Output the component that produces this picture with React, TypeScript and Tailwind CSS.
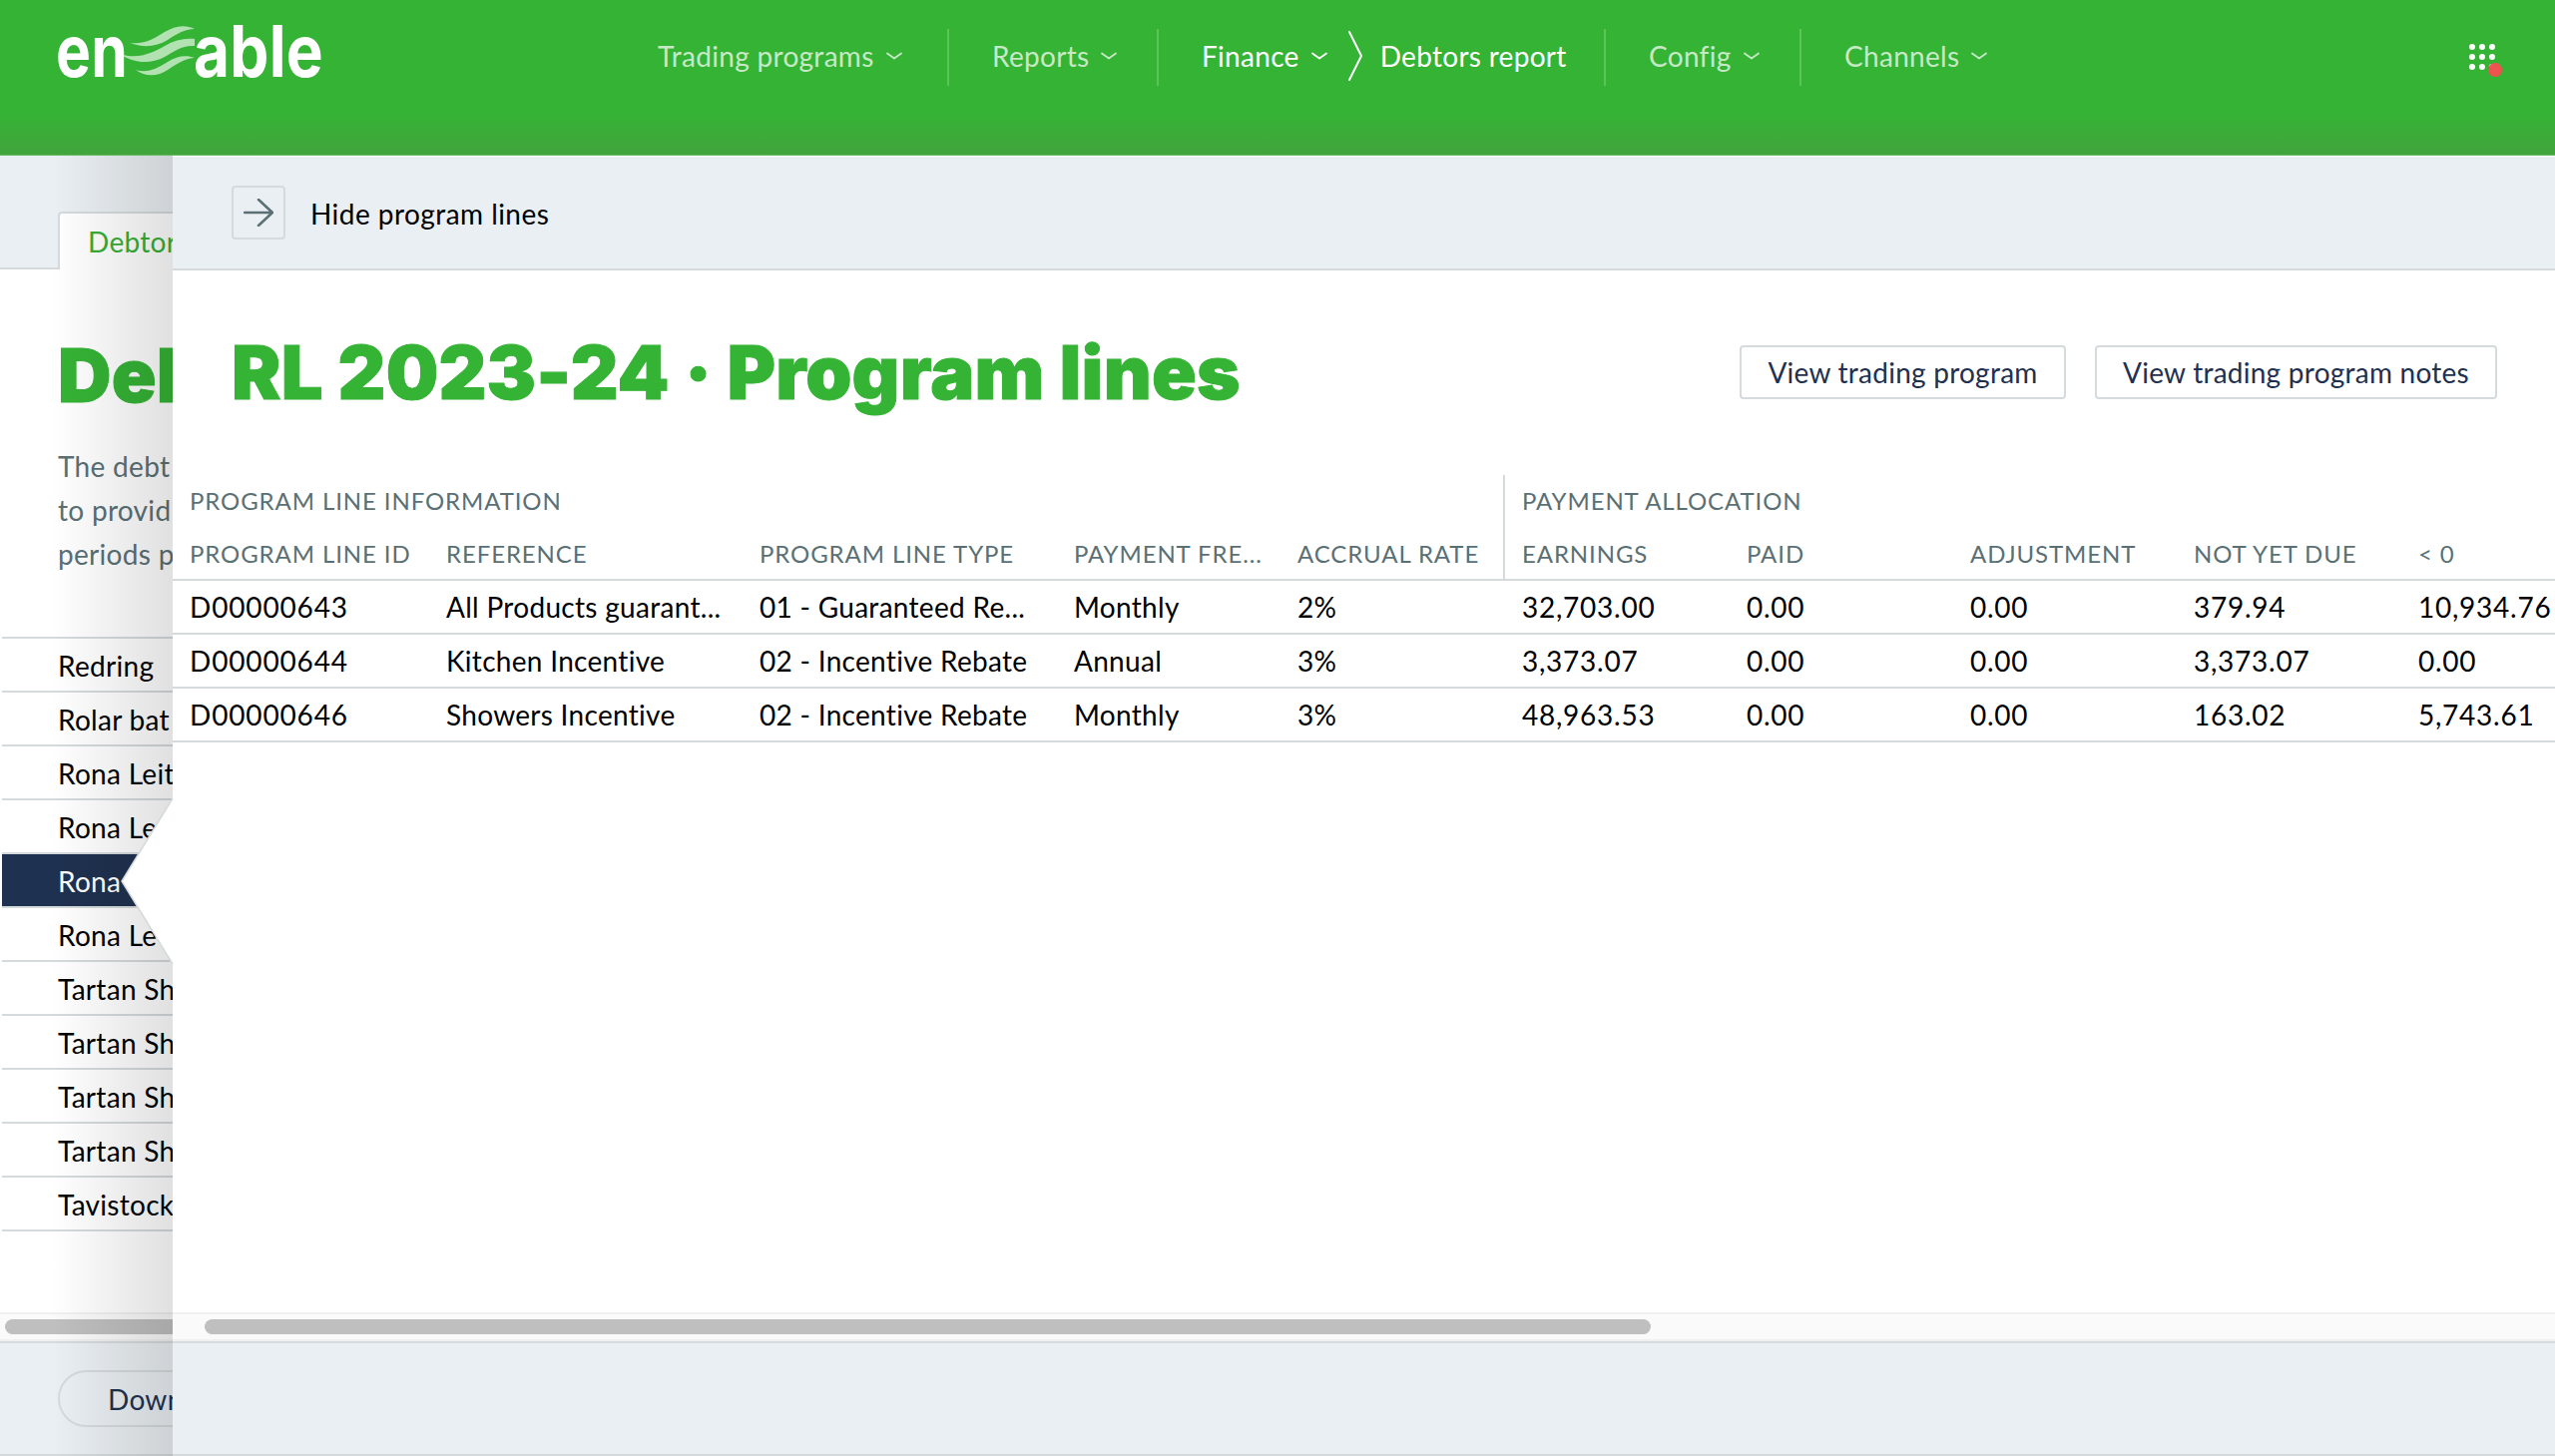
import React from "react";

const rowGrid = "grid grid-cols-[258px_314px_315px_224px_222px_228px_224px_224px_225px_160px] w-[2394px]";

function Chevron({ bright = false }: { bright?: boolean }) {
  return (
    <svg width="18" height="10" viewBox="0 0 18 10" fill="none" className={bright ? "ml-[11px] text-white" : "ml-[11px] text-[#c6e9c5]"}>
      <path d="M2 2.5 L9 7.5 L16 2.5" stroke="currentColor" strokeWidth="1.8" strokeLinecap="round" strokeLinejoin="round" />
    </svg>
  );
}

function Logo() {
  return (
    <svg width="300" height="100" viewBox="0 0 300 100" className="shrink-0 overflow-visible">
      <text x="16" y="67" fill="#fff" fontFamily="Inter, sans-serif" fontWeight="700" fontSize="72" textLength="72" lengthAdjust="spacingAndGlyphs">en</text>
      <text x="154" y="67" fill="#fff" fontFamily="Inter, sans-serif" fontWeight="700" fontSize="72" textLength="130" lengthAdjust="spacingAndGlyphs">able</text>
      <g fill="#fff" fillOpacity="0.62">
        <path d="M90 33 C105 35 115 28 125 22 C135 16 145 14 155 19 C145 19 137 24 128 30 C117 37 103 38 90 33Z" />
        <path d="M80 44 C98 50 113 43 125 36 C135 30 145 28 155 29 L155 36 C143 35 135 41 125 47 C110 55 93 53 80 44Z" />
        <path d="M96 60 C108 64 118 58 128 52 C137 46 147 45 155 48 C147 48 138 53 128 60 C118 67 105 67 96 60Z" />
      </g>
    </svg>
  );
}

function Dots() {
  const dots = [0, 1, 2, 3, 4, 5, 6, 7, 8];
  return (
    <div className="relative grid grid-cols-[6px_6px_6px] gap-x-[4px] gap-y-[4px]">
      {dots.map((d) => (
        <span key={d} className="w-[6px] h-[6px] rounded-full bg-white" />
      ))}
      <span className="absolute left-[19px] top-[19px] w-[14px] h-[14px] rounded-full bg-[#ef5350]" />
    </div>
  );
}

function Header() {
  return (
    <header className="h-[156px] shrink-0 bg-[linear-gradient(180deg,#35b335_0%,#35b335_72%,#41a43c_100%)] border-b border-[#6dbb68] flex items-start pl-[40px] text-[28px] text-[#c6e9c5] tracking-[0.3px]">
      <div className="mt-[10px] w-[619px] shrink-0">
        <Logo />
      </div>
      <nav className="flex items-stretch h-[57px] mt-[29px]">
        <div className="w-[290px] flex items-center pb-[3px]">
          <span>Trading programs</span>
          <Chevron />
        </div>
        <div className="w-[210px] flex items-center border-l-2 border-[#5cc45b] pl-[43px] pb-[3px]">
          <span>Reports</span>
          <Chevron />
        </div>
        <div className="w-[448px] flex items-center border-l-2 border-[#5cc45b] pl-[43px] pb-[3px] text-white">
          <span>Finance</span>
          <Chevron bright />
          <svg width="16" height="52" viewBox="0 0 16 52" fill="none" className="ml-[19px] mr-[17px]">
            <path d="M2 2 L14 26 L2 50" stroke="#fff" strokeWidth="2" strokeLinecap="round" strokeLinejoin="round" />
          </svg>
          <span>Debtors report</span>
        </div>
        <div className="w-[196px] flex items-center border-l-2 border-[#5cc45b] pl-[43px] pb-[3px]">
          <span>Config</span>
          <Chevron />
        </div>
        <div className="w-[300px] flex items-center border-l-2 border-[#5cc45b] pl-[43px] pb-[3px]">
          <span>Channels</span>
          <Chevron />
        </div>
      </nav>
      <div className="ml-[371px] mt-[44px]">
        <Dots />
      </div>
    </header>
  );
}

const leftRows = ["Redring", "Rolar bat", "Rona Leit", "Rona Le", "Rona", "Rona Le", "Tartan Sh", "Tartan Sh", "Tartan Sh", "Tartan Sh", "Tavistock"];

function BackPage() {
  return (
    <div className="absolute left-0 top-[156px] bottom-0 w-[173px] overflow-hidden flex flex-col text-[28px] tracking-[0.3px] whitespace-nowrap bg-white">
      <div className="h-[114px] shrink-0 bg-[#eaeff3] border-b-2 border-[#d5dadd] flex items-end pl-[58px]">
        <div className="h-[58px] w-[140px] -mb-[2px] bg-white border-t-2 border-l-2 border-[#d5dadd] rounded-tl-[4px] pl-[28px] pt-[7px] text-[#36ae36]">Debtors</div>
      </div>
      <div className="h-[368px] shrink-0 pl-[58px]">
        <div className="mt-[62px] font-black text-[74px] leading-[88px] text-[#35b335] tracking-[0.2px] font-[Inter] [-webkit-text-stroke:1px_#35b335]">Deb</div>
        <div className="mt-[25px] text-[#5a7075] leading-[44px]">
          <div>The debt</div>
          <div>to provid</div>
          <div>periods p</div>
        </div>
      </div>
      <div className="border-b-2 border-[#d5dadd] ml-[2px]" />
      {leftRows.map((r, i) => (
        <div
          key={i}
          className={
            i === 4
              ? "h-[54px] shrink-0 ml-[2px] pl-[56px] pt-[1px] flex items-center bg-[#1f3150] text-white border-b-2 border-[#d5dadd]"
              : "h-[54px] shrink-0 ml-[2px] pl-[56px] pt-[1px] flex items-center text-black border-b-2 border-[#d5dadd]"
          }
        >
          {r}
        </div>
      ))}
      <div className="flex-1" />
      <div className="h-[29px] shrink-0 bg-[#fafafa] border-y-2 border-[#f0f0f0] flex items-center pl-[5px]">
        <div className="h-[15px] w-[200px] rounded-l-full bg-[#bfbfbf]" />
      </div>
      <div className="h-[115px] shrink-0 bg-[#eaeff3] border-y-2 border-[#d5dadd] pl-[58px] pt-[27px]">
        <div className="h-[57px] w-[220px] rounded-full border-2 border-[#d5dadd] pl-[48px] flex items-center text-[#1f3150]">Download</div>
      </div>
      <div className="absolute inset-0 bg-[linear-gradient(90deg,rgba(0,0,0,0)_30%,rgba(0,0,0,0.12)_100%)]" />
    </div>
  );
}

const rows = [
  ["D00000643", "All Products guarant...", "01 - Guaranteed Re...", "Monthly", "2%", "32,703.00", "0.00", "0.00", "379.94", "10,934.76"],
  ["D00000644", "Kitchen Incentive", "02 - Incentive Rebate", "Annual", "3%", "3,373.07", "0.00", "0.00", "3,373.07", "0.00"],
  ["D00000646", "Showers Incentive", "02 - Incentive Rebate", "Monthly", "3%", "48,963.53", "0.00", "0.00", "163.02", "5,743.61"],
];

const headers = ["PROGRAM LINE ID", "REFERENCE", "PROGRAM LINE TYPE", "PAYMENT FRE...", "ACCRUAL RATE", "EARNINGS", "PAID", "ADJUSTMENT", "NOT YET DUE", "< 0"];

function cellClass(i: number) {
  if (i === 0) return "pl-[17px] flex items-center tracking-[0.85px]";
  if (i === 5) return "pl-[19px] flex items-center tracking-[0.75px]";
  if (i >= 6) return "pl-[16px] flex items-center tracking-[0.75px]";
  return "pl-[16px] flex items-center tracking-[0.3px]";
}

function Panel() {
  return (
    <div className="absolute left-[173px] top-[157px] right-0 bottom-0 flex flex-col bg-white">
      <div className="h-[114px] shrink-0 bg-[#eaeff3] border-b-2 border-[#d5dadd] flex items-center pl-[59px]">
        <div className="w-[54px] h-[54px] rounded-[4px] border-2 border-[#d5dadd] flex items-center justify-center">
          <svg width="30" height="28" viewBox="0 0 30 28" fill="none">
            <path d="M1 14 H29 M15 1 L29 14 L15 27" stroke="#5a7075" strokeWidth="2.5" strokeLinecap="round" strokeLinejoin="round" />
          </svg>
        </div>
        <span className="ml-[25px] pt-[2px] text-[28px] text-black tracking-[0.45px]">Hide program lines</span>
      </div>
      <div className="flex-1 overflow-hidden">
        <div className="flex items-center justify-between pl-[59px] pr-[58px] pt-[75px] h-[128px]">
          <h1 className="font-black text-[74px] leading-[54px] text-[#35b335] tracking-[0.2px] font-[Inter] [-webkit-text-stroke:1px_#35b335]">RL 2023-24 · Program lines</h1>
          <div className="flex gap-[29px]">
            <button className="h-[54px] w-[327px] rounded-[4px] border-2 border-[#d5dadd] text-[28px] tracking-[0.25px] text-[#1f3150]">View trading program</button>
            <button className="h-[54px] w-[403px] rounded-[4px] border-2 border-[#d5dadd] text-[28px] tracking-[0.25px] text-[#1f3150]">View trading program notes</button>
          </div>
        </div>
        <div className="mt-[77px] text-[24px] tracking-[0.9px] text-[#5a7075] whitespace-nowrap">
          <div className={rowGrid + " h-[52px]"}>
            <div className="col-span-5 pl-[17px] flex items-center">PROGRAM LINE INFORMATION</div>
            <div className="col-span-5 border-l-2 border-[#d5dadd] pl-[17px] flex items-center">PAYMENT ALLOCATION</div>
          </div>
          <div className={rowGrid + " h-[52px]"}>
            {headers.map((h, i) => (
              <div
                key={h}
                className={
                  i === 5
                    ? "border-l-2 border-[#d5dadd] pl-[17px] pt-[2px] flex items-center"
                    : i === 0
                      ? "pl-[17px] pt-[2px] flex items-center"
                      : "pl-[16px] pt-[2px] flex items-center"
                }
              >
                {h}
              </div>
            ))}
          </div>
        </div>
        <div className="border-t-2 border-[#d5dadd] text-[28px] text-black whitespace-nowrap">
          {rows.map((r) => (
            <div key={r[0]} className="h-[54px] border-b-2 border-[#d5dadd]">
              <div className={rowGrid + " h-[52px]"}>
                {r.map((c, i) => (
                  <div key={i} className={cellClass(i)}>
                    {c}
                  </div>
                ))}
              </div>
            </div>
          ))}
        </div>
      </div>
      <div className="h-[29px] shrink-0 bg-[#fafafa] border-y-2 border-[#f0f0f0] flex items-center pl-[32px]">
        <div className="h-[15px] w-[1449px] rounded-full bg-[#bfbfbf]" />
      </div>
      <div className="h-[115px] shrink-0 bg-[#eaeff3] border-y-2 border-[#d5dadd]" />
    </div>
  );
}

function Notch() {
  return (
    <svg width="54" height="168" viewBox="0 0 54 168" fill="none" className="absolute left-[120px] top-[799px]">
      <path d="M53 1 L2 84 L53 167 Z" fill="#fff" />
      <path d="M53 1 L2 84 L53 167" stroke="#d5dadd" strokeWidth="1.5" />
    </svg>
  );
}

export default function App() {
  return (
    <div className="relative w-full h-screen overflow-hidden bg-white font-[Lato,'Liberation_Sans',sans-serif]">
      <Header />
      <BackPage />
      <Panel />
      <Notch />
    </div>
  );
}
